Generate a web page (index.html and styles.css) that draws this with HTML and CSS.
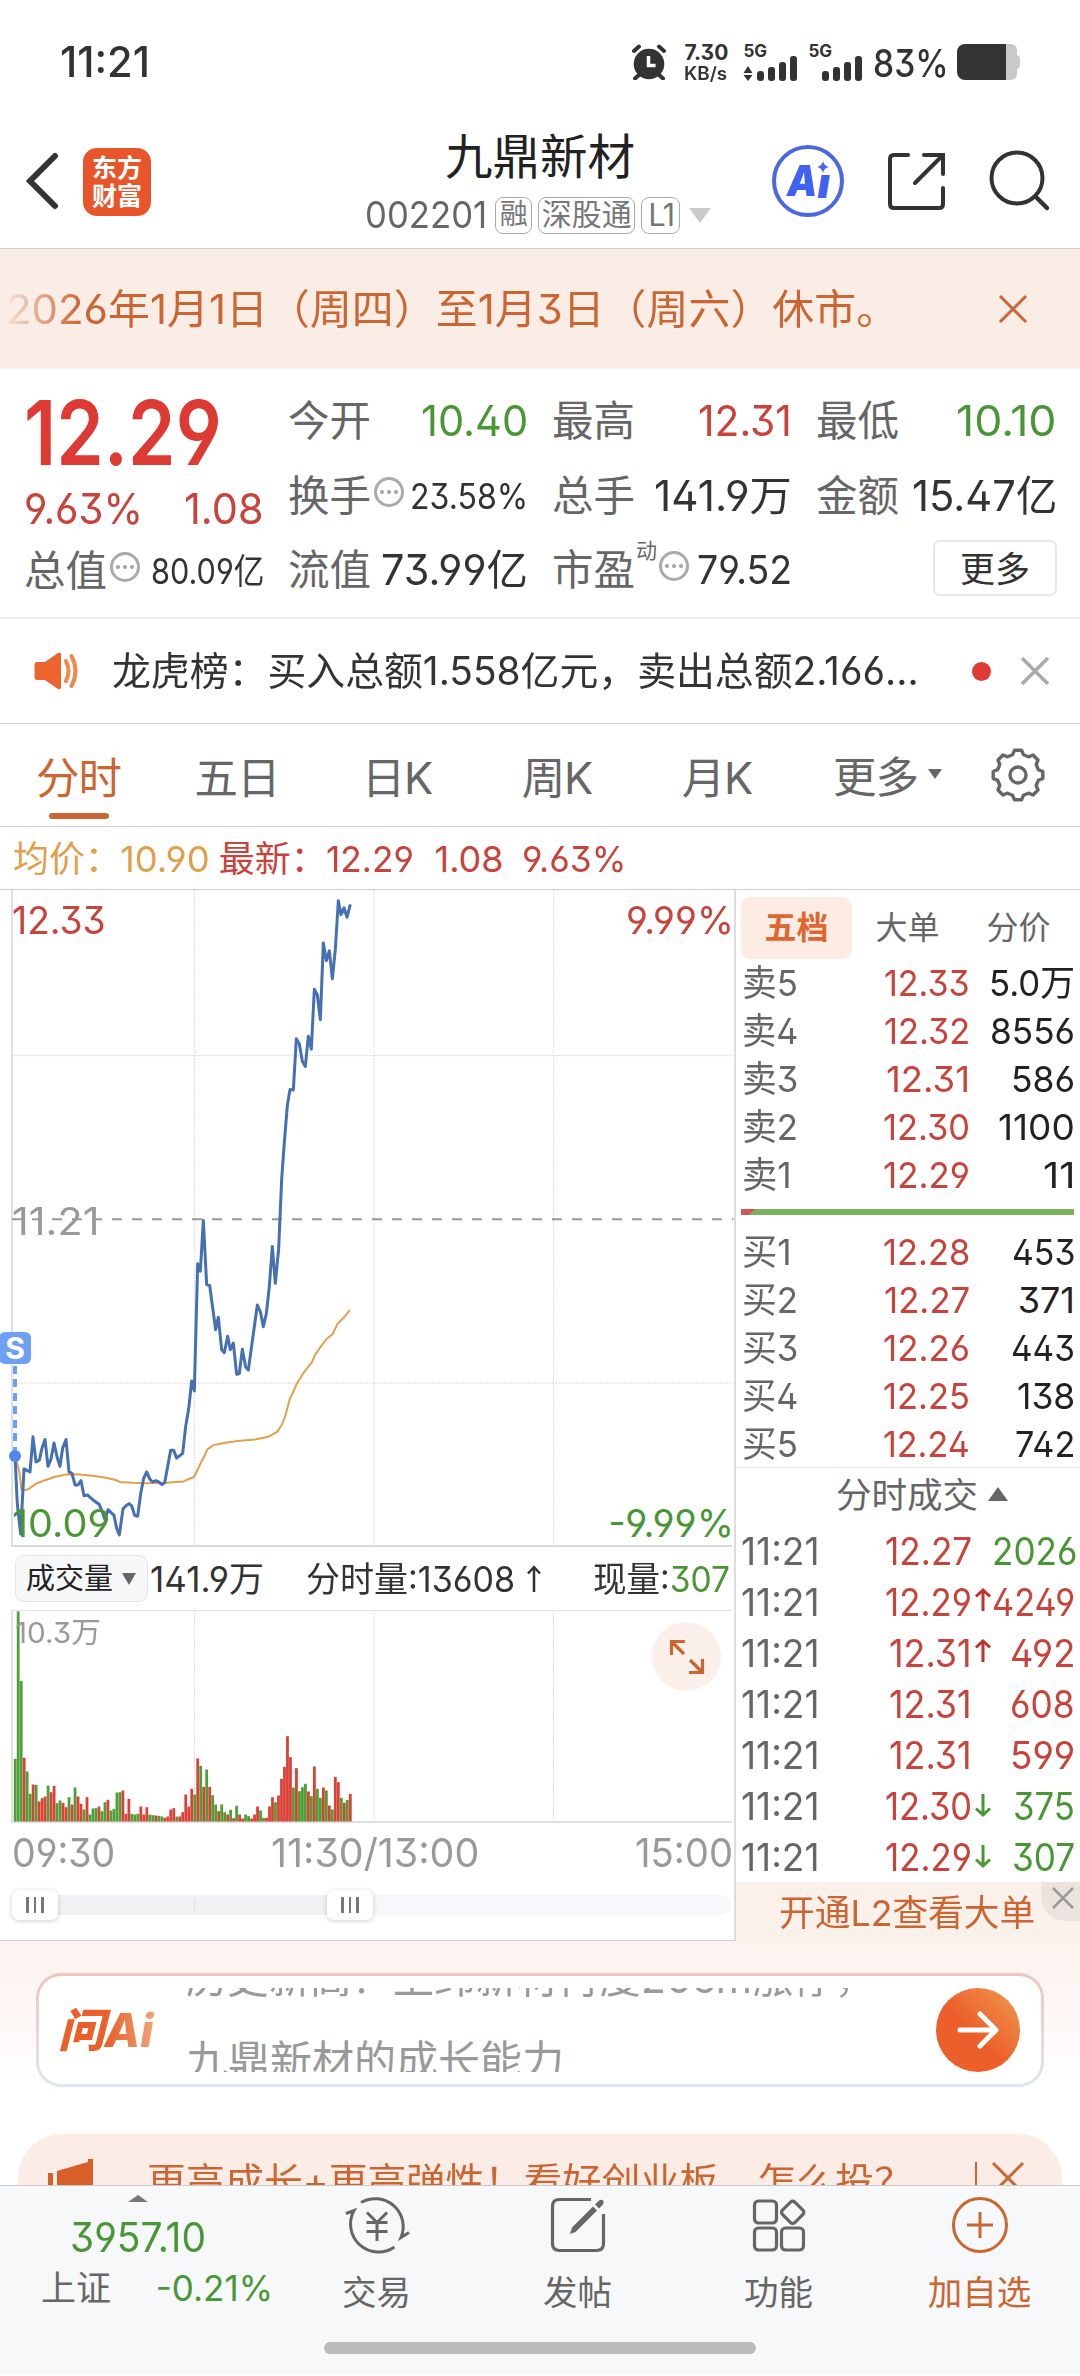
FILE: index.html
```html
<!DOCTYPE html>
<html lang="zh-CN">
<head>
<meta charset="utf-8">
<title>九鼎新材 002201</title>
<link rel="stylesheet" href="styles.css">
</head>
<body>
<div class="page">
  <div class="status">
    <span class="clock" data-w="90">11:21</span>
    <div class="status-right">
      <svg class="alarm" width="36" height="36" viewBox="0 0 36 36"><circle cx="18" cy="20" r="15.3" fill="#333"/><path d="M3 7L8 2.500M33 7L28 2.500M4 34.500L9 30M32 34.500L27 30" stroke="#333" stroke-width="4" stroke-linecap="round"/><path d="M17.500 12v9.500h7" fill="none" stroke="#fff" stroke-width="3.500"/></svg>
      <div class="speed"><span data-w="44">7.30</span><span class="unit" data-w="43">KB/s</span></div>
      <div class="signal">
        <b data-w="24">5G</b>
        <svg width="56" height="37" viewBox="0 0 56 37"><path d="M0.500 29L5 22l4.500 7zM0.500 31h9L5 37z" fill="#333"/><g fill="#333"><rect x="14" y="27" width="7" height="10" rx="3"/><rect x="25" y="23" width="7" height="14" rx="3"/><rect x="36" y="18" width="7" height="19" rx="3"/><rect x="47" y="12" width="7" height="25" rx="3"/></g></svg>
      </div>
      <div class="signal second">
        <b data-w="24">5G</b>
        <svg width="56" height="37" viewBox="0 0 56 37"><g fill="#333"><rect x="14" y="27" width="7" height="10" rx="3"/><rect x="25" y="23" width="7" height="14" rx="3"/><rect x="36" y="18" width="7" height="19" rx="3"/><rect x="47" y="12" width="7" height="25" rx="3"/></g></svg>
      </div>
      <span class="percent" data-w="76">83%</span>
      <svg class="battery" width="64" height="36" viewBox="0 0 64 36"><path d="M49 0h5a6 6 0 0 1 6 6v5q3 1 3 4v6q0 3-3 4v5a6 6 0 0 1-6 6h-5z" fill="#c9c9c9"/><path d="M8 0h41v36H8a8 8 0 0 1-8-8V8a8 8 0 0 1 8-8z" fill="#333"/></svg>
    </div>
  </div>

  <header class="header">
    <svg class="back" width="34" height="60" viewBox="0 0 34 60"><path d="M30 5L5 30l25 25" fill="none" stroke="#333" stroke-width="6" stroke-linecap="round"/></svg>
    <div class="logo">东方<br>财富</div>
    <div class="title">
      <h1>九鼎新材</h1>
      <div class="code"><span class="code-no" data-w="122">002201</span><span class="tag t1">融</span><span class="tag t3">深股通</span><span class="tag t2">L1</span><i class="tri-down"></i></div>
    </div>
    <div class="ai"><span data-w="30">A</span><span class="ai-i" data-w="12">ı</span><svg width="12" height="12" viewBox="0 0 12 12"><path d="M6 0Q7 5 12 6 7 7 6 12 5 7 0 6 5 5 6 0z" fill="#4565ee"/></svg></div>
    <svg class="share" width="60" height="60" viewBox="0 0 60 60"><path d="M22 4H8q-4 0-4 4v45q0 4 4 4h45q4 0 4-4V37M38 4h19v19M56 5L29 32" fill="none" stroke="#333" stroke-width="4" stroke-linecap="round"/></svg>
    <svg class="search" width="64" height="64" viewBox="0 0 64 64"><circle cx="29" cy="29" r="25.500" fill="none" stroke="#333" stroke-width="4"/><path d="M47.500 47.500L59 59" stroke="#333" stroke-width="4.500" stroke-linecap="round"/></svg>
  </header>

  <div class="notice"><div class="notice-text"><span data-w="892">2026年1月1日（周四）至1月3日（周六）休市。</span></div>
    <svg class="notice-x" width="30" height="30" viewBox="0 0 30 30"><path d="M2 2l26 26M28 2L2 28" stroke="#cb6633" stroke-width="3"/></svg>
  </div>

  <section class="quote">
    <div class="q-main">
      <div class="big"><span data-w="198">12.29</span></div>
      <div class="cell red"><span data-w="119">9.63%</span><span data-w="80">1.08</span></div>
      <div class="cell cap"><label>总值</label><i class="info"></i><span class="small push" data-w="113">80.09亿</span></div>
    </div>
    <div class="q-grid">
      <div class="cell"><label>今开</label><span class="green" data-w="107">10.40</span></div>
      <div class="cell"><label>最高</label><span class="red" data-w="94">12.31</span></div>
      <div class="cell"><label>最低</label><span class="green" data-w="101">10.10</span></div>
      <div class="cell"><label>换手</label><i class="info"></i><span class="small push" data-w="118">23.58%</span></div>
      <div class="cell"><label>总手</label><span data-w="138">141.9万</span></div>
      <div class="cell"><label>金额</label><span data-w="146">15.47亿</span></div>
      <div class="cell"><label>流值</label><span data-w="147">73.99亿</span></div>
      <div class="cell"><label>市盈</label><sup>动</sup><i class="info"></i><span class="mid push" data-w="95">79.52</span></div>
      <div class="cell"><button class="more">更多</button></div>
    </div>
  </section>

  <div class="news">
    <svg class="horn" width="46" height="40" viewBox="0 0 46 40"><path d="M3 11h8L24 2q3-1.500 3 2v32q0 3.500-3 2L11 29H3q-2.500 0-2.500-3V14q0-3 2.500-3z" fill="#ec642e"/><path d="M32 10q5 10 0 20M37.500 5q8 15 0 30" fill="none" stroke="#f08a4c" stroke-width="4" stroke-linecap="round"/></svg>
    <span class="news-text" data-w="807">龙虎榜：买入总额1.558亿元，卖出总额2.166...</span>
    <i class="dot"></i>
    <svg class="news-x" width="30" height="30" viewBox="0 0 30 30"><path d="M2 2l26 26M28 2L2 28" stroke="#aaa" stroke-width="3.500"/></svg>
  </div>

  <nav class="tabs">
    <span class="tab on">分时</span><span class="tab">五日</span><span class="tab">日K</span><span class="tab">周K</span><span class="tab">月K</span>
    <span class="tab more-tab">更多<i></i></span>
    <svg class="gear" width="54" height="54" viewBox="-27 -27 54 54"><path d="M20.300-5.400L24.800-3.500V3.500L20.300 5.400 18.200 10.500 20 15 15 20 10.500 18.200 5.400 20.300 3.500 24.800H-3.500L-5.400 20.300-10.500 18.200-15 20-20 15-18.200 10.500-20.300 5.400-24.800 3.500V-3.500L-20.300-5.400-18.200-10.500-20-15-15-20-10.500-18.200-5.400-20.300-3.500-24.800H3.500L5.400-20.300 10.500-18.200 15-20 20-15 18.200-10.500z" fill="none" stroke="#666" stroke-width="3.400" stroke-linejoin="round"/><circle r="8" fill="none" stroke="#666" stroke-width="3.400"/></svg>
  </nav>

  <div class="avg"><span class="gold a1">均价：</span><span class="gold a2" data-w="90">10.90</span><span class="a3">最新：</span><span class="a4" data-w="88">12.29</span><span class="a5" data-w="69">1.08</span><span data-w="104">9.63%</span></div>

  <main class="market">
    <section class="left">
      <div class="chart">
        <svg class="chart-svg" width="734" height="657" viewBox="0 23 2202 1515" preserveAspectRatio="none">
          <g class="grid"><path d="M584 23V1537M1122 23V1537M1661 23V1537M36 405H2200M36 1160H2200"/></g>
          <path class="mid-line" d="M36 782H2200"/>
          <path id="avg-line"/><path id="price-line"/>
        </svg>
        <span class="lbl tl red" data-w="94">12.33</span><span class="lbl tr red" data-w="108">9.99%</span>
        <span class="lbl ml gray" data-w="88">11.21</span>
        <span class="lbl bl green" data-w="99">10.09</span><span class="lbl br green" data-w="126">-9.99%</span>
        <div class="marker"><b>S</b><i></i><u></u></div>
      </div>
      <div class="vol-head">
        <span class="pill">成交量<i></i></span><span class="v1" data-w="114">141.9万</span><span class="v2" data-w="209">分时量:13608</span><svg class="up" width="16" height="30" viewBox="0 0 16 30"><path d="M8 28V3M2 9.500L8 3l6 6.500" fill="none" stroke="#333" stroke-width="2.500"/></svg><span class="v3" data-w="137">现量:<em>307</em></span>
      </div>
      <div class="volume">
        <svg id="vol" width="734" height="213" viewBox="0 0 734 213"><g class="grid"><path d="M194.500 0V212M374 0V212M553.500 0V212"/></g></svg>
        <span class="vlabel gray" data-w="86">10.3万</span>
        <div class="expand"><svg width="36" height="36" viewBox="0 0 36 36"><path d="M2.500 16V2.500H16M3 3l12 12M33.500 20v13.500H20M33 33L21 21" fill="none" stroke="#cb6633" stroke-width="3.200"/></svg></div>
      </div>
      <div class="times"><span data-w="103">09:30</span><span class="noon" data-w="208">11:30/13:00</span><span data-w="98">15:00</span></div>
      <div class="slider"><div class="range"></div><div class="handle"><i></i><i></i><i></i></div><div class="handle end"><i></i><i></i><i></i></div></div>
    </section>

    <aside class="book">
      <div class="book-tabs"><b>五档</b><span>大单</span><span>分价</span></div>
      <div class="levels" id="sells"></div>
      <div class="ratio"><svg width="333" height="6"><rect width="333" height="6" fill="#78b159"/><path d="M0 0h14L8 6H0z" fill="#cf5850"/></svg></div>
      <div class="levels" id="buys"></div>
      <div class="ticks-head">分时成交<i></i></div>
      <div class="ticks" id="ticks"></div>
      <div class="l2"><span data-w="256">开通L2查看大单</span><div class="l2-x"><svg width="24" height="24" viewBox="0 0 24 24"><path d="M2 2l20 20M22 2L2 22" stroke="#999" stroke-width="2.500"/></svg></div></div>
    </aside>
  </main>

  <section class="ask">
    <div class="ask-box">
      <div class="ask-logo"><span data-w="96">问Ai</span></div>
      <div class="ask-text"><p><span data-w="690">历史新高！上纬新材再度20cm涨停，</span></p><p>九鼎新材的成长能力</p></div>
      <div class="go"><svg width="44" height="40" viewBox="0 0 44 40"><path d="M4 20h36M24 4l16 16-16 16" fill="none" stroke="#fff" stroke-width="5" stroke-linecap="round" stroke-linejoin="round"/></svg></div>
    </div>
    <div class="promo">
      <svg class="mega" width="48" height="46" viewBox="0 0 48 46"><path d="M0 14h5v24H0zM9 12L40 3V0h5v46h-5v-4L9 36z" fill="#d95f28"/></svg>
      <span class="promo-text" data-w="766">更高成长+更高弹性！看好创业板，怎么投？</span>
      <i class="sep"></i>
      <svg class="promo-x" width="34" height="34" viewBox="0 0 34 34"><path d="M2 2l30 30M32 2L2 32" stroke="#cb6633" stroke-width="3"/></svg>
    </div>
  </section>

  <footer class="nav">
    <div class="index"><i class="tri-up"></i><span class="idx" data-w="136">3957.10</span><div class="idx-row"><span>上证</span><span class="green" data-w="117">-0.21%</span></div></div>
    <div class="item"><svg width="68" height="60" viewBox="0 0 68 60"><g fill="none" stroke="#666" stroke-width="3"><path d="M18 7.500A28 28 0 0 1 58 42.500l8-5M51.500 52A28 28 0 0 1 11 15.500l-8 3M24 17.500l10 10 10-10M34 27v19M23.500 27.500h21M23.500 36.500h21"/></g></svg>交易</div>
    <div class="item"><svg width="60" height="60" viewBox="0 0 60 60"><path d="M43 4.500H11.500q-7 0-7 7v37q0 7 7 7h37q7 0 7-7V19" fill="none" stroke="#666" stroke-width="3.200"/><path d="M22 39l2-6.500L45 11.500l4 4L27.500 37zM47 9.500l4-4q2.500-1.500 4 0t0 4l-4 4z" fill="#666"/></svg>发帖</div>
    <div class="item"><svg width="60" height="60" viewBox="0 0 60 60"><g fill="none" stroke="#666" stroke-width="3.200"><rect x="5.500" y="6" width="22" height="22" rx="4"/><rect x="5.500" y="33" width="22" height="22" rx="4"/><rect x="32.500" y="33" width="22" height="22" rx="4"/><rect x="35" y="8.500" width="17.500" height="17.500" rx="3" transform="rotate(45 43.700 17.200)"/></g></svg>功能</div>
    <div class="item add"><svg width="60" height="60" viewBox="0 0 60 60"><g fill="none" stroke="#cb6633" stroke-width="3"><circle cx="30" cy="30" r="26.500"/><path d="M30 17v26M17 30h26"/></g></svg>加自选</div>
    <i class="home"></i>
  </footer>
</div>
<script src="app.js"></script>
</body>
</html>
```
FILE: styles.css
```css
* { box-sizing: border-box; }
body { margin: 0; background: #fff; }
.page {
  width: 1080px; height: 2376px; overflow: hidden;
  display: flex; flex-direction: column;
  font-family: Inter, "Noto Sans CJK SC", sans-serif;
  font-feature-settings: "ss01";
  line-height: 1.2;
  color: #333; background: #fff;
}
.page svg { display: block; flex: none; }
[data-w] { display: inline-block; white-space: nowrap; transform-origin: left center; flex: none; }
i, em { font-style: normal; }
i { display: block; flex: none; }
.red { color: #c8433b; }
.green { color: #4a9636; }
.gray { color: #999; }
.gold { color: #e0a04a; }

/* status bar */
.status { height: 118px; flex: none; display: flex; justify-content: space-between; padding: 0 60px 0 60px; }
.clock { font-size: 42px; font-weight: 500; line-height: 123px; }
.status-right { display: flex; padding-top: 44px; }
.speed { width: 59px; margin-left: 17px; display: flex; flex-direction: column; align-items: flex-start; font-size: 21px; font-weight: 700; line-height: 17px; }
.speed .unit { margin-top: 4px; font-size: 18px; font-weight: 600; }
.signal { position: relative; width: 65px; }
.signal b { position: absolute; left: 0; top: 0; font-size: 17px; line-height: 14px; }
.percent { font-size: 38px; font-weight: 500; line-height: 38px; margin-left: 0; }
.battery { margin-left: 8px; margin-right: -1px; }

/* header */
.header { height: 131px; flex: none; display: flex; position: relative; border-bottom: 1px solid #ccc; padding-left: 25px; }
.back { margin-top: 33px; }
.logo { width: 68px; height: 68px; margin: 30px 0 0 24px; border-radius: 14px; background: #e9552a; color: #fff; font: 700 25px/28px "Noto Sans CJK SC", sans-serif; text-align: center; padding-top: 4px; }
.title { width: 400px; margin-left: 216px; display: flex; flex-direction: column; }
.title h1 { margin: 14px 0 0 78px; font-size: 47.500px; font-weight: 400; line-height: 50px; color: #222; }
.code { display: flex; align-items: center; height: 38px; margin-top: 14px; margin-left: -2px; }
.code-no { font-size: 37px; color: #666; }
.tag { height: 37px; border: 1.500px solid #aaa; border-radius: 8px; font-size: 28px; line-height: 33px; color: #777; text-align: center; margin-left: 6px; }
.t1 { width: 37px; margin-left: 8px; }
.t3 { width: 97px; font-size: 30px; }
.t2 { width: 39px; font-size: 31px; letter-spacing: -2px; }
.tri-down { margin-left: 9px; border: 11px solid transparent; border-top: 15px solid #c9c9c9; border-bottom: 0; }
.ai { position: relative; width: 72px; height: 72px; margin: 27px 0 0 5px; border: 4px solid #4a69df; border-radius: 50%; display: flex; padding-left: 11px; color: #4062f3; font-size: 42px; font-weight: 900; font-style: italic; line-height: 64px; }
.ai svg { position: absolute; right: 11px; top: 12px; }
.ai-i { padding-top: 2px; }
.share { margin: 33px 0 0 42px; }
.search { margin: 31px 0 0 42px; }

/* holiday notice */
.notice { height: 120px; flex: none; display: flex; align-items: center; background: #faede5; color: #cb6633; font-size: 41px; border-bottom: 1px solid #f5f5f5; }
.notice-text { width: 998px; padding-left: 6px; line-height: 60px; -webkit-mask: linear-gradient(90deg, transparent, #000 80px); mask: linear-gradient(90deg, transparent, #000 80px); }

/* quote */
.quote { height: 250px; flex: none; display: flex; padding: 15px 0 0 24px; border-bottom: 2px solid #eee; }
.q-main { width: 240px; padding-top: 0; }
.big { height: 87px; line-height: 98px; font-size: 89px; font-weight: 600; color: #dd3a33; }
.q-main .cell.red { height: 74px; }
.q-main .cap { margin-top: -11px; }
.cell { display: flex; align-items: center; justify-content: space-between; font-size: 42px; height: 74.500px; line-height: 60px; }
.q-main .cell.red { font-size: 43px; }
.cell label { color: #666; font-size: 41.500px; }
.cell .small { font-size: 35px; }
.cell .mid { font-size: 39px; }
.cell .push { margin-left: auto; }
.q-grid { display: grid; grid-template-columns: 240px 240px 241px; column-gap: 24px; margin-left: 24px; align-content: start; }
.info { position: relative; width: 30px; height: 30px; border: 3px solid #aaa; border-radius: 50%; margin: -8px 0 0 3px; background: radial-gradient(circle at 50% 50%, #aaa 1.800px, transparent 2.300px) 0 0 / 24px 24px, radial-gradient(circle at 5px 50%, #aaa 1.800px, transparent 2.300px), radial-gradient(circle at 19px 50%, #aaa 1.800px, transparent 2.300px); }
sup { font-size: 21px; line-height: 24px; color: #666; align-self: flex-start; margin: 6px -1px 0 1px; }
.more { width: 124px; height: 56px; margin-left: auto; margin-top: -4px; border: 2px solid #e6e6e6; border-radius: 7px; background: #fff; color: #333; font: 400 35px/46px "Noto Sans CJK SC", sans-serif; padding: 0 0 3px; }

/* news */
.news { height: 105px; flex: none; display: flex; align-items: center; padding-left: 34px; border-bottom: 1px solid #ccc; }
.news-text { font-size: 39px; margin-left: 32px; line-height: 60px; }
.dot { width: 19px; height: 19px; border-radius: 50%; background: #dd3b33; margin-left: 53px; }
.news-x { margin-left: 29px; }

/* tabs */
.tabs { height: 103px; flex: none; display: grid; grid-template-columns: 157px repeat(4, 160px) 194px 54px; align-items: center; text-align: center; border-bottom: 1px solid #ccc; font-size: 43.500px; color: #666; }
.tab { position: relative; line-height: 101px; letter-spacing: -1px; padding-top: 4px; height: 102px; }
.tab.on { color: #cb6633; }
.tab.on::after { content: ""; position: absolute; left: 49px; bottom: 7px; width: 60px; height: 6px; border-radius: 3px; background: #cb6633; }
.more-tab { display: flex; align-items: center; padding-left: 36px; }
.more-tab i { margin: -6px 0 0 10px; border: 7.500px solid transparent; border-top: 10px solid #666; border-bottom: 0; }

/* averages */
.avg { height: 63px; flex: none; display: flex; align-items: center; padding: 3px 0 0 13px; font-size: 36px; color: #c8433b; border-bottom: 1px solid #ccc; white-space: nowrap; }
.a1 { width: 107px; }
.a2 { margin-right: 8px; }
.a3 { width: 108px; margin-left: 1px; }
.a4 { margin-right: 21px; margin-left: -1px; }
.a5 { margin-right: 18px; }

/* market */
.market { height: 1051px; flex: none; display: grid; grid-template-columns: 734px 346px; border-bottom: 1px solid #ccc; }
.chart { position: relative; height: 657px; }
.chart::before { content: ""; position: absolute; left: 11px; top: 0; right: 2px; bottom: 0; border-left: 2px solid #e0e0e0; border-bottom: 2px solid #d8d8d8; }
.chart-svg { position: relative; }
.chart-svg path, .grid path { vector-effect: non-scaling-stroke; fill: none; }
.grid path { stroke: #dcdcdc; stroke-width: 1; stroke-dasharray: 2 1; }
.mid-line { stroke: #999; stroke-width: 2; stroke-dasharray: 10 10; }
#price-line { stroke: #4571b3; stroke-width: 3; stroke-linejoin: round; }
#avg-line { stroke: #dfa04f; stroke-width: 2; }
.lbl { position: absolute; font-size: 38px; line-height: 40px; }
.tl, .ml, .bl { left: 12px; }
.tr, .br { right: 0; }
.tl, .tr { top: 10px; }
.ml { top: 311px; }
.bl, .br { top: 613px; }
.marker { position: absolute; left: -1px; top: 442px; width: 32px; display: flex; flex-direction: column; align-items: center; }
.marker b { width: 32px; height: 32px; border-radius: 6px; background: #6f9ff5; color: #fff; font-size: 30px; line-height: 32px; text-align: center; }
.marker i { height: 86px; margin-top: 2px; width: 4px; background: repeating-linear-gradient(#6f9ff5 0 8px, transparent 8px 13.500px); }
.marker u { width: 12px; height: 12px; margin-top: -2px; border-radius: 50%; background: #5286ec; }
.vol-head { height: 63px; display: flex; align-items: center; padding-left: 15px; font-size: 35px; }
.pill { width: 133px; height: 47px; border: 1.500px solid #e2e4e8; border-radius: 9px; background: #f6f7f9; font-size: 29px; line-height: 43px; padding-left: 10px; display: flex; align-items: center; color: #222; }
.pill i { margin-left: 9px; border: 7.500px solid transparent; border-top: 12px solid #666; border-bottom: 0; }
.v1 { margin-left: 2px; }
.v2 { margin-left: 42px; }
.up { margin-left: 11px; }
.v3 { margin-left: 51px; }
.v3 em { color: #4a9636; }
.volume { position: relative; height: 213px; }
.volume::before { content: ""; position: absolute; left: 11px; top: 0; right: 2px; bottom: 0; border: 2px solid #e0e0e0; border-top-width: 1px; border-right: 0; }
#vol { position: relative; }
.vlabel { position: absolute; left: 15px; top: 5px; font-size: 29px; line-height: 36px; }
.expand { position: absolute; left: 652px; top: 12px; width: 69px; height: 69px; border-radius: 50%; background: #faf0e9; display: flex; align-items: center; justify-content: center; }
.times { height: 59px; display: flex; justify-content: space-between; align-items: center; padding: 2px 1px 0 12px; font-size: 39px; color: #999; }
.slider { position: relative; height: 20px; margin: 13px 3px 0 12px; border-radius: 10px; background: #f8f8fa; }
.range { width: 340px; height: 20px; background: linear-gradient(#ddd, #ddd) 182px 4px / 1px 12px no-repeat #f1f1f3; border-radius: 10px; }
.handle { position: absolute; left: 0; top: -5px; width: 46px; height: 30px; border-radius: 7px; background: #fff; box-shadow: 0 1px 5px rgba(0,0,0,.2); display: flex; gap: 5px; justify-content: center; align-items: center; }
.handle.end { left: 315px; }
.handle i { width: 2.500px; height: 16px; background: #777; }

/* order book */
.book { border-left: 2px solid #ddd; display: flex; flex-direction: column; }
.book-tabs { display: grid; grid-template-columns: repeat(3, 111px); margin: 7px 0 0 5px; height: 60px; text-align: center; font-size: 32px; line-height: 62px; color: #666; }
.book-tabs b { background: #fcece4; color: #e0652f; border-radius: 9px; }
.levels { height: 240px; margin-top: 2px; }
.level { display: grid; grid-template-columns: 1fr auto 105px; height: 48px; line-height: 48px; align-items: center; padding: 0 5px 0 6px; font-size: 36px; }
.level label { color: #666; }
.level .qty { text-align: right; color: #222; }
.ratio { margin: 10px 0 0 5px; height: 12px; }
.ratio + .levels { margin-top: 7px; height: 239px; }
.ticks-head { height: 58px; border-top: 1px solid #e2e2e2; display: flex; align-items: center; justify-content: center; font-size: 35.500px; color: #666; padding-left: 28px; }
.ticks-head i { margin-left: 10px; margin-top: -5px; border: 10.500px solid transparent; border-bottom: 14px solid #666; border-top: 0; }
.ticks { height: 357px; }
.tick { display: grid; grid-template-columns: 1fr auto 20px 83px; height: 51px; line-height: 50px; align-items: center; padding: 0 5px 0 5px; font-size: 38px; }
.tick .qty { text-align: right; }
.tick time { color: #666; }
.l2 { position: relative; flex: 1; background: #fbf1eb; color: #cb6633; font-size: 36px; line-height: 62px; padding-left: 43px; }
.l2-x { position: absolute; right: 0; top: 0; width: 39px; height: 39px; background: #ebe3de; border-bottom-left-radius: 24px; padding: 4px 0 0 10px; }

/* ask ai */
.ask { height: 244px; flex: none; padding: 32px 18px 0; background: linear-gradient(#fdf2ef, #fff 150px); overflow: hidden; }
.ask-box { height: 114px; margin: 0 18px; border: 3px solid transparent; border-radius: 25px; background: linear-gradient(#fff, #fff) padding-box, linear-gradient(#efc6be, #dfe6f1) border-box; display: flex; align-items: center; }
.ask-logo { width: 147px; padding-left: 19px; }
.ask-logo span { font-size: 46px; font-weight: 800; font-style: italic; line-height: 60px; background: linear-gradient(90deg, #e9602b 50%, #f0a273); -webkit-background-clip: text; background-clip: text; color: transparent; }
.ask-text { height: 84px; width: 740px; overflow: hidden; color: #999; font-size: 42px; }
.ask-text p { margin: 0; height: 83px; line-height: 60px; }
.ask-text p:first-child { margin-top: -40px; }
.go { width: 84px; height: 84px; margin-left: 10px; border-radius: 50%; background: linear-gradient(45deg, #ec5f2b 45%, #f09b50); display: flex; align-items: center; justify-content: center; }
.promo { height: 90px; margin-top: 47px; border-radius: 44px; background: #fbede5; display: flex; align-items: flex-start; padding: 25px 0 0 30px; color: #cb6633; }
.promo-text { font-size: 38px; line-height: 44px; margin-left: 51px; }
.sep { width: 2px; height: 40px; background: #cb6633; margin: 3px 0 0 62px; }
.promo-x { margin: 2px 0 0 14px; }

/* bottom nav */
.nav { position: relative; height: 190px; flex: none; background: #f7f8fa; border-top: 1px solid #c8cacc; display: grid; grid-template-columns: 276px repeat(4, 201px) ; }
.index { display: flex; flex-direction: column; align-items: center; }
.tri-up { margin: 9px 0 0 0; border: 10.500px solid transparent; border-bottom: 7px solid #777; border-top: 0; }
.idx { font-size: 41px; line-height: 50px; margin-top: 10px; color: #4a9636; }
.idx-row { align-self: stretch; display: flex; justify-content: space-between; padding: 0 3px 0 41px; font-size: 35px; line-height: 50px; margin-top: 1px; color: #666; }
.item { display: flex; flex-direction: column; align-items: center; padding-top: 9px; font-size: 34.500px; line-height: 50px; color: #666; }
.item svg { margin-bottom: 13px; }
.add { color: #cb6633; }
.home { position: absolute; left: 324px; top: 156px; width: 432px; height: 12px; border-radius: 6px; background: #bbbbbe; }
```
FILE: app.js
```js
const sells = [[5, '12.33', '5.0万', 86], [4, '12.32', '8556', 85], [3, '12.31', '586', 64], [2, '12.30', '1100', 77], [1, '12.29', '11', 32]];
const buys = [[1, '12.28', '453', 63], [2, '12.27', '371', 57], [3, '12.26', '443', 64], [4, '12.25', '138', 58], [5, '12.24', '742', 60]];
const priceWidth = { '12.31': 84, '12.33': 86, '12.32': 86, '12.27': 86 };

function levels(id, side, rows) {
  document.getElementById(id).innerHTML = rows.map(([n, p, q, w]) =>
    `<div class="level"><label><span data-w="${n === 1 ? 50 : 56}">${side}${n}</span></label>` +
    `<span class="red" data-w="${priceWidth[p] || 87}">${p}</span>` +
    `<span class="qty"><span data-w="${w}">${q}</span></span></div>`).join('');
}
levels('sells', '卖', sells);
levels('buys', '买', buys);

const ticks = [['12.27', '', 2026, 'green', 85], ['12.29', 'up', 4249, 'red', 83], ['12.31', 'up', 492, 'red', 65],
  ['12.31', '', 608, 'red', 65], ['12.31', '', 599, 'red', 65], ['12.30', 'down', 375, 'green', 62], ['12.29', 'down', 307, 'green', 63]];
const arrows = {
  '': '<i></i>',
  up: '<svg width="20" height="30" viewBox="0 0 20 30"><path d="M11 24V3M4 9.500L11 3l7 6.500" fill="none" stroke="#c0322a" stroke-width="3"/></svg>',
  down: '<svg width="20" height="30" viewBox="0 0 20 30"><path d="M11 3v21M4 17.500L11 24l7-6.500" fill="none" stroke="#4a9636" stroke-width="3"/></svg>'
};
document.getElementById('ticks').innerHTML = ticks.map(([p, a, q, c, w]) =>
  `<div class="tick"><time><span data-w="79">11:21</span></time><span class="red" data-w="${p === '12.31' ? 83 : 87}">${p}</span>` +
  `${arrows[a]}<span class="qty ${c}"><span data-w="${w}">${q}</span></span></div>`).join('');

const price = '45,1328 52,1440 62,1508 72,1358 90,1365 99,1284 108,1342 118,1338 126,1310 135,1290 144,1352 153,1335 162,1298 171,1330 180,1352 188,1310 198,1290 207,1365 216,1368 225,1395 234,1395 243,1385 252,1420 262,1418 280,1430 298,1440 306,1455 315,1475 324,1452 342,1465 350,1495 358,1510 369,1450 378,1443 387,1438 395,1443 404,1465 413,1467 422,1415 431,1380 440,1365 450,1382 458,1388 468,1385 476,1388 486,1394 494,1390 512,1315 521,1315 530,1333 548,1322 557,1260 566,1220 575,1155 583,1178 593,885 601,902 610,785 620,933 629,935 647,1037 655,1008 665,1083 673,1090 683,1052 691,1083 700,1068 710,1140 718,1138 727,1082 737,1123 745,1130 772,980 781,995 790,1030 799,1000 808,937 817,845 826,930 836,850 845,690 853,605 862,520 870,483 880,484 889,366 898,378 907,418 916,430 925,360 934,390 943,252 952,265 961,322 970,145 979,186 988,163 997,228 1006,160 1015,48 1023,80 1032,64 1041,86 1051,56';
const average = '48,1335 58,1365 65,1408 85,1405 108,1392 135,1384 165,1376 198,1371 230,1370 270,1373 310,1377 345,1383 360,1388 400,1390 440,1391 500,1390 550,1387 583,1376 602,1345 612,1330 622,1313 640,1303 680,1297 720,1293 765,1290 805,1284 832,1272 845,1257 855,1238 870,1195 880,1180 890,1162 912,1135 935,1113 945,1095 965,1073 980,1058 998,1047 1012,1024 1030,1010 1050,991';
document.getElementById('price-line').setAttribute('d', 'M' + price);
document.getElementById('avg-line').setAttribute('d', 'M' + average);

/* one entry per minute: direction and bar height in thirds of a pixel */
const volume = 'g188 g630 g422 r191 g150 g83 r111 g110 r60 r70 r75 g108 r88 r107 g55 g63 r56 r43 g73 r51 g102 r75 r53 g36 r73 g21 g39 g40 r45 g31 g58 r65 g33 g38 g87 g88 r93 r23 r68 g23 g21 g23 r45 r21 r43 g21 g19 r18 g17 g15 r11 r15 r36 r40 g15 r15 r28 r81 r45 r98 g81 r189 g167 r104 g156 r104 g79 g51 r31 g51 g28 r21 g35 r10 g47 r21 r9 g21 g16 r9 r21 r45 g33 g11 r11 r45 r73 g58 r78 r128 r164 r256 r193 g102 r160 g91 g103 g113 r90 g76 r165 g98 g71 r102 g93 r48 g36 r134 r118 g71 r56 g65 r83';
const vol = document.getElementById('vol');
volume.split(' ').forEach((v, i) => {
  const h = v.slice(1) / 3;
  const bar = document.createElementNS('http://www.w3.org/2000/svg', 'rect');
  bar.setAttribute('x', (13.8 + i * 2.992).toFixed(2));
  bar.setAttribute('y', (211.5 - h).toFixed(2));
  bar.setAttribute('width', 2.8);
  bar.setAttribute('height', h.toFixed(2));
  bar.setAttribute('fill', v[0] === 'g' ? '#4f9f37' : '#dc4138');
  vol.appendChild(bar);
});

document.querySelectorAll('[data-w]').forEach(el => {
  const w = +el.dataset.w, natural = el.offsetWidth;
  el.style.transform = `scaleX(${w / natural})`;
  el.style.marginRight = `${parseFloat(getComputedStyle(el).marginRight) + w - natural}px`;
});
```
